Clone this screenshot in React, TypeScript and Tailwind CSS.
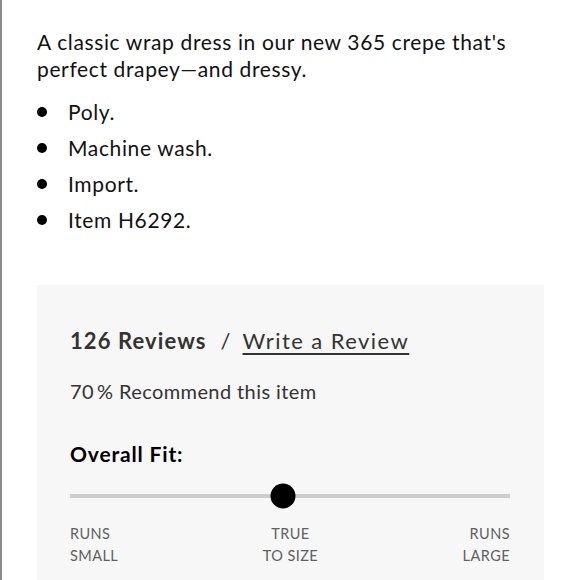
import React from "react";

const bullets = ["Poly.", "Machine wash.", "Import.", "Item H6292."];

export default function App() {
  return (
    <div className="min-h-screen border-l-2 border-[#8a8a8a] bg-white pl-[35px] pr-[36px] pt-[28px] font-['Lato',sans-serif] text-[#111]">
      <p className="text-[21px] leading-[27px] tracking-[0.03em]">
        A classic wrap dress in our new 365 crepe that's perfect drapey—and dressy.
      </p>
      <ul className="mt-[12px]">
        {bullets.map(b => (
          <li key={b} className="flex h-[36px] items-center text-[21px] tracking-[0.03em]">
            <span className="mr-[21px] h-[10px] w-[10px] rounded-full bg-black"></span>
            {b}
          </li>
        ))}
      </ul>
      <div className="mt-[47px] bg-[#f7f7f7] pl-[33px] pr-[34px] pb-[20px] pt-[41px] text-[#333]">
        <div className="flex items-center text-[22px] leading-[30px]">
          <span className="font-bold tracking-[0.05em]">126 Reviews</span>
          <span className="ml-[14px] mr-[12px]">/</span>
          <span className="tracking-[0.065em] underline decoration-[1.5px] underline-offset-[4px]">Write a Review</span>
        </div>
        <p className="mt-[22px] text-[20px] leading-[26px] tracking-[0.02em]">
          70<span className="ml-[3px]">%</span> Recommend this item
        </p>
        <p className="mt-[36px] text-[21px] font-bold leading-[28px] tracking-[0.04em] text-black">Overall Fit:</p>
        <div className="relative mt-[15px] flex h-[26px] items-center">
          <div className="h-[4px] w-full bg-[#cccccc]"></div>
          <div className="absolute left-[48.3%] top-1/2 h-[25px] w-[25px] -translate-x-1/2 -translate-y-1/2 rounded-full bg-black"></div>
        </div>
        <div className="mt-[14px] flex justify-between text-[14.5px] leading-[22px] tracking-[0.03em] text-[#5f5f5f]">
          <span>RUNS<br />SMALL</span>
          <span className="text-center">TRUE<br />TO SIZE</span>
          <span className="text-right">RUNS<br />LARGE</span>
        </div>
      </div>
    </div>
  );
}
